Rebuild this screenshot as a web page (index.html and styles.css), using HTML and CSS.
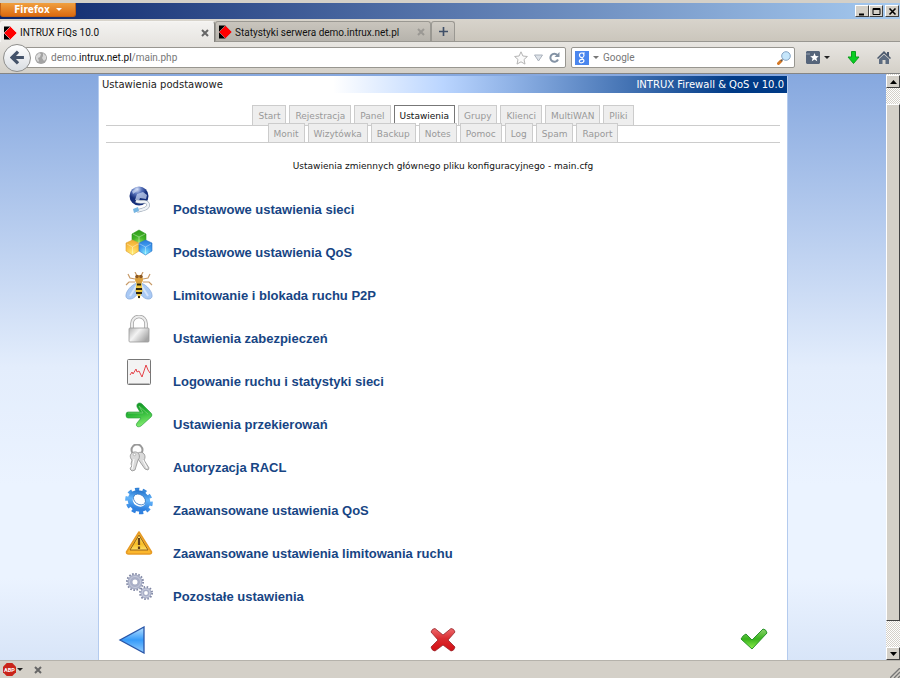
FILE: index.html
```html
<!doctype html>
<html lang="pl">

<head>
    <meta charset="utf-8" />
    <meta name="viewport" content="width=device-width, initial-scale=1.0" />
    <title>INTRUX FiQs 10.0</title>
    <link rel="stylesheet" href="styles.css">
</head>

<body>
    <header class="title-bar">
        <button class="firefox-btn">Firefox <span class="caret"></span></button>
        <div class="window-btns">
            <button class="win-btn" aria-label="Minimize"><svg viewBox="0 0 11 9"><path d="M2 7.5h5" stroke="#000" stroke-width="2"/></svg></button>
            <button class="win-btn" aria-label="Maximize"><svg viewBox="0 0 11 9"><path d="M2 1.5h7v6H2zM2 2.5h7" fill="none" stroke="#000"/></svg></button>
            <button class="win-btn win-close" aria-label="Close"><svg viewBox="0 0 11 9"><path d="M2.5 1.5l6 6M8.5 1.5l-6 6" stroke="#000" stroke-width="1.6"/></svg></button>
        </div>
    </header>

    <nav class="browser-tabs" aria-label="Browser tabs">
        <div class="browser-tab active">
            <svg class="favicon" viewBox="0 0 14 14"><path d="M0 0h7v14H0z"/><path d="M7 0l7 7-7 7-7-7z" fill="#f00" stroke="#fff" stroke-width=".6"/></svg>
            <span class="tab-title">INTRUX FiQs 10.0</span>
            <button class="tab-close" aria-label="Close tab"><svg viewBox="0 0 8 8"><path d="M1 1l6 6M7 1L1 7"/></svg></button>
        </div>
        <div class="browser-tab">
            <svg class="favicon" viewBox="0 0 14 14"><path d="M0 0h7v14H0z"/><path d="M7 0l7 7-7 7-7-7z" fill="#f00" stroke="#bbb" stroke-width=".6"/></svg>
            <span class="tab-title">Statystyki serwera demo.intrux.net.pl</span>
            <button class="tab-close" aria-label="Close tab"><svg viewBox="0 0 8 8"><path d="M1 1l6 6M7 1L1 7"/></svg></button>
        </div>
        <button class="new-tab" aria-label="New tab"><svg viewBox="0 0 10 10"><path d="M5 0v10M0 5h10" stroke="#3f4f68" stroke-width="1.8"/></svg></button>
    </nav>

    <div class="nav-bar">
        <button class="back-btn" aria-label="Back"><svg viewBox="0 0 14 14"><path d="M7.5 1.5L2 7l5.500 5.500M2.500 7H13" fill="none" stroke="#44536a" stroke-width="3"/></svg></button>
        <div class="url-bar">
            <svg class="globe" viewBox="0 0 12 12"><circle cx="6" cy="6" r="6" fill="#a3a3a3"/><path d="M1 4l3-3 2 1-1 3-2 1 1 3-1 1-2-3zM8 1l3 3v3L9 9 7 6l1-2z" fill="#d9d9d9"/></svg>
            <a class="url" href="#">demo.<b>intrux.net.pl</b>/main.php</a>
            <button aria-label="Bookmark this page"><svg width="14" height="14" viewBox="0 0 14 14"><path d="M7 .8l1.900 4.200 4.500.5-3.400 3 1 4.600-4-2.300-4 2.300 1-4.600-3.400-3 4.500-.5z" fill="#fafafa" stroke="#b4b4b4"/></svg></button>
            <button aria-label="History"><svg width="9" height="8" viewBox="0 0 9 8"><path d="M.5 1h8l-4 6z" fill="#dde2e8" stroke="#aab2bc"/></svg></button>
            <button aria-label="Reload"><svg width="11" height="11" viewBox="0 0 11 11"><path d="M8.300 3A4 4 0 1 0 9 7.500" fill="none" stroke="#8493a5" stroke-width="2"/><path d="M10.500 0v5h-5z" fill="#8493a5"/></svg></button>
        </div>
        <div class="search-bar">
            <svg class="engine" viewBox="0 0 14 14"><path d="M0 0h14v14H0z" fill="#4a86ee"/><path d="M9.800 2H6.600a2.300 2.300 0 1 0 .4 4.600 2.300 2.300 0 0 0 .8-4.300M7 6.600c-.8 1 1.900 1.400 1.900 3 0 2.800-4.600 2.800-4.600.6 0-1.700 2.600-2 3.700-1.800" fill="none" stroke="#fff" stroke-width="1.200"/></svg>
            <span class="caret"></span>
            <input type="text" placeholder="Google" aria-label="Search">
            <svg class="loupe" viewBox="0 0 14 14"><path d="M1.500 12.500L4 10" stroke="#d57825" stroke-width="3" stroke-linecap="round"/><path d="M4 10l1.500-1.500" stroke="#555" stroke-width="1.500"/><circle cx="9" cy="5" r="4.300" fill="#c6e6fb" stroke="#86a4c4"/></svg>
        </div>
        <div class="toolbar">
            <button class="bookmarks" aria-label="Bookmarks"><svg width="14" height="13" viewBox="0 0 14 13"><path d="M1 0h12l1 1v11l-1 1H1l-1-1V1z" fill="#56657a"/><path d="M0 3h4" stroke="#96a2b1"/><path d="M8.500 2l1.200 3 3.100.2-2.400 2 .8 3.100-2.700-1.700-2.700 1.700.8-3.100-2.400-2L7.300 5z" fill="#fff"/></svg><span class="caret"></span></button>
            <button aria-label="Downloads"><svg width="13" height="13" viewBox="0 0 13 13"><path d="M4.500.5h4V6H12l-5.500 6.500L1 6h3.500z" fill="#08ce21" stroke="#0b9e1c"/></svg></button>
            <button aria-label="Home"><svg width="14" height="13" viewBox="0 0 14 13"><path d="M0 7l7-7 3 3V1h2v4l2 2-1 1-6-5.500L1 8z" fill="#4a586c"/><path d="M2 8l5-4.500L12 8v5H8.500V9h-3v4H2z" fill="#5d6c80"/></svg></button>
        </div>
    </div>

    <div class="viewport">
        <main class="page">
            <div class="page-head">
                <span>Ustawienia podstawowe</span>
                <span class="product">INTRUX Firewall &amp; QoS v 10.0</span>
            </div>

            <nav class="menu">
                <div class="menu-row">
                    <a href="#">Start</a>
                    <a href="#">Rejestracja</a>
                    <a href="#">Panel</a>
                    <a href="#" class="current">Ustawienia</a>
                    <a href="#">Grupy</a>
                    <a href="#">Klienci</a>
                    <a href="#">MultiWAN</a>
                    <a href="#">Pliki</a>
                </div>
                <div class="menu-row second">
                    <a href="#">Monit</a>
                    <a href="#">Wizytówka</a>
                    <a href="#">Backup</a>
                    <a href="#">Notes</a>
                    <a href="#">Pomoc</a>
                    <a href="#">Log</a>
                    <a href="#">Spam</a>
                    <a href="#">Raport</a>
                </div>
            </nav>

            <p class="intro">Ustawienia zmiennych głównego pliku konfiguracyjnego - main.cfg</p>

            <ul class="settings">
                <li>
                    <svg viewBox="0 0 28 28">
                        <defs><radialGradient id="globe" cx=".4" cy=".15"><stop offset="0" stop-color="#dbe5fa"/><stop offset=".5" stop-color="#5873bb"/><stop offset="1" stop-color="#162f7b"/></radialGradient></defs>
                        <circle cx="14" cy="10" r="9.500" fill="url(#globe)"/>
                        <path d="M12 8l6-2 4 3-1 4-6-1-1 3-4-1zM7 5l4-2 1 2-4 3z" fill="#c6d4f0" opacity=".75"/>
                        <path d="M11 15c4 2 8 0 10 1 5 3 1 7-5 8l-4 1" fill="none" stroke="#a4afbc" stroke-width="3.600"/>
                        <path d="M11 15c4 2 8 0 10 1 5 3 1 7-5 8l-4 1" fill="none" stroke="#eff3f7" stroke-width="2.200"/>
                        <path d="M8 23l5-2 1 4-5 2z" fill="#75b5e2"/>
                    </svg>
                    <a href="#">Podstawowe ustawienia sieci</a>
                </li>
                <li>
                    <svg viewBox="0 0 28 28">
                        <defs>
                            <radialGradient id="cubeGreen" cx=".5" cy=".9" r=".9"><stop stop-color="#a4e866"/><stop offset=".55" stop-color="#41b526"/><stop offset="1" stop-color="#2c9818"/></radialGradient>
                            <radialGradient id="cubeYellow" cx=".5" cy=".9" r=".9"><stop stop-color="#fff07c"/><stop offset=".55" stop-color="#fcc64a"/><stop offset="1" stop-color="#edab32"/></radialGradient>
                            <radialGradient id="cubeBlue" cx=".5" cy=".9" r=".9"><stop stop-color="#82edff"/><stop offset=".55" stop-color="#429df0"/><stop offset="1" stop-color="#287bdc"/></radialGradient>
                        </defs>
                        <path d="M14 1l7 4v8l-7 4-7-4V5z" fill="url(#cubeGreen)" stroke="#329a23" stroke-width=".6" stroke-linejoin="round"/>
                        <path d="M7.500 11l6.500 3v8l-6.500 4L1 22v-8z" fill="url(#cubeYellow)" stroke="#dca338" stroke-width=".6" stroke-linejoin="round"/>
                        <path d="M20.500 11l6.500 3v8l-6.500 4-6.500-4v-8z" fill="url(#cubeBlue)" stroke="#3079c6" stroke-width=".6" stroke-linejoin="round"/>
                        <path d="M8 5l6 3 6-3M14 8v8M2 15l5.500 3 5.500-3M7.500 18v7M15 15l5.500 3 5.500-3M20.500 18v7" fill="none" stroke="#fff" stroke-width=".7" opacity=".55"/>
                    </svg>
                    <a href="#">Podstawowe ustawienia QoS</a>
                </li>
                <li>
                    <svg viewBox="0 0 28 28">
                        <path d="M10 7L5 6 3 2M10 10H4l-3 3M18 7l5-1 2-4M18 10h6l3 3M12 4l-2-4M16 4l2-4" fill="none" stroke="#c79a68" stroke-width="1.200"/>
                        <path d="M12 11C6 13 0 20 1 25c2 4 9 2 12-4zM16 11c6 2 12 9 11 14-2 4-9 2-12-4z" fill="#a9c9f4" stroke="#86a9da" stroke-width=".7"/>
                        <path d="M12 13L5 24M16 13l7 11" stroke="#d4e4fb" stroke-width="2"/>
                        <ellipse cx="14" cy="7.500" rx="4" ry="4.500" fill="#dba03d"/><circle cx="12" cy="4.500" r="1.700" fill="#8b5722"/><circle cx="16" cy="4.500" r="1.700" fill="#8b5722"/>
                        <path d="M11.500 11h5l1 8-3.500 8-3.500-8z" fill="#efc63c"/><path d="M12 12.500h4M11 17h6M11 21h6M13 25h2" stroke="#2c2514" stroke-width="2"/>
                    </svg>
                    <a href="#">Limitowanie i blokada ruchu P2P</a>
                </li>
                <li>
                    <svg viewBox="0 0 28 28">
                        <defs><linearGradient id="steel" x2="1" y2=".6"><stop stop-color="#b4b4b4"/><stop offset=".45" stop-color="#f3f3f3"/><stop offset="1" stop-color="#a6a6a6"/></linearGradient></defs>
                        <path d="M7 14V8.500a7 7 0 0 1 14 0V14" fill="none" stroke="#a5a5a5" stroke-width="3.600"/>
                        <path d="M7 14V8.500a7 7 0 0 1 14 0V14" fill="none" stroke="#ececec" stroke-width="2"/>
                        <rect x="4" y="13" width="20" height="14" rx="1" fill="url(#steel)" stroke="#9a9a9a" stroke-width=".8"/>
                    </svg>
                    <a href="#">Ustawienia zabezpieczeń</a>
                </li>
                <li>
                    <svg viewBox="0 0 28 28">
                        <rect x="2.500" y="1.500" width="23" height="25" rx="1" fill="#f3f3f3" stroke="#777"/>
                        <path d="M3.500 25.500h21" stroke="#bbb"/>
                        <path d="M5 17l2-3 1 2 3-5 1 3 2-1 3 6 4-12 2 5 2 3" fill="none" stroke="#e5434a"/>
                    </svg>
                    <a href="#">Logowanie ruchu i statystyki sieci</a>
                </li>
                <li>
                    <svg viewBox="0 0 28 28">
                        <defs><linearGradient id="green" x2=".3" y2="1"><stop stop-color="#0c8a20"/><stop offset=".5" stop-color="#28b535"/><stop offset="1" stop-color="#78e668"/></linearGradient></defs>
                        <path d="M3 11h12l-3-5c-1-4 3-5 5-3l9 9q2 2 0 4l-10 9c-3 2-6 0-4-3l4-5H3q-2 0-2-3t2-3z" fill="url(#green)" stroke="#219638" stroke-width=".6"/>
                        <path d="M3 12h15l-4-7 9 8" fill="none" stroke="#79ce76" stroke-width=".8"/>
                    </svg>
                    <a href="#">Ustawienia przekierowań</a>
                </li>
                <li>
                    <svg viewBox="0 0 28 28">
                        <circle cx="12" cy="6" r="5.500" fill="none" stroke="#999" stroke-width="2"/>
                        <g fill="#dadada" stroke="#8f8f8f" stroke-width=".8" stroke-linejoin="round">
                            <path d="M13 9c5-3 9 3 6 7l5 8-1 2-3-1-7-10c-3-1-3-4 0-6z"/>
                            <path d="M9 8c5-1 7 5 4 8l-3 10-3 1-2-2 1-2 1-1-1-2 1-4c-3-3-2-7 2-8z"/>
                        </g>
                        <path d="M9 15L7 25M18 16l4 8" stroke="#fff"/>
                        <circle cx="9.500" cy="10.500" r="1.200" fill="#fff" stroke="#999" stroke-width=".6"/>
                    </svg>
                    <a href="#">Autoryzacja RACL</a>
                </li>
                <li>
                    <svg viewBox="0 0 28 28">
                        <defs><linearGradient id="cog" x2=".6" y2="1"><stop stop-color="#1f6fc9"/><stop offset=".5" stop-color="#64b5fa"/><stop offset="1" stop-color="#2f80df"/></linearGradient></defs>
                        <g transform="rotate(35 14 14)" fill="none" stroke="url(#cog)"><ellipse cx="14" cy="14" rx="12.500" ry="11" stroke-width="3.500" stroke-dasharray="4.100 3.300"/><ellipse cx="14" cy="14" rx="9.200" ry="7.800" stroke-width="5"/></g>
                        <ellipse cx="13.500" cy="12.500" rx="6.500" ry="4.800" transform="rotate(35 14 14)" fill="#fff" stroke="#2167b8" stroke-width=".7"/>
                    </svg>
                    <a href="#">Zaawansowane ustawienia QoS</a>
                </li>
                <li>
                    <svg viewBox="0 0 28 28">
                        <defs><linearGradient id="warn" x2="0" y2="1"><stop stop-color="#fff08a"/><stop offset=".6" stop-color="#f8bd25"/><stop offset="1" stop-color="#ffe066"/></linearGradient></defs>
                        <path d="M14 2L26.500 22q0 2-2 2h-21q-2 0-2-2z" fill="#fbb72d" stroke="#e79b25" stroke-width="1.600" stroke-linejoin="round"/>
                        <path d="M14 5l9 15H5z" fill="url(#warn)" stroke="#8b5a18" stroke-width=".9"/>
                        <path d="M14 8v7M14 16.500V19" stroke="#63401b" stroke-width="2.200"/>
                    </svg>
                    <a href="#">Zaawansowane ustawienia limitowania ruchu</a>
                </li>
                <li>
                    <svg viewBox="0 0 28 28">
                        <g fill="none"><circle cx="10" cy="9" r="8" stroke="#7f86a3" stroke-width="2" stroke-dasharray="1.600 1.540"/><circle cx="10" cy="9" r="5" stroke="#a9afc7" stroke-width="5"/><circle cx="10" cy="9" r="5.500" stroke="#c6cbdc"/>
                        <circle cx="21" cy="20" r="6" stroke="#7f86a3" stroke-width="2" stroke-dasharray="1.500 1.640"/><circle cx="21" cy="20" r="3.700" stroke="#a9afc7" stroke-width="3.600"/><circle cx="21" cy="20" r="4" stroke="#c6cbdc"/></g>
                    </svg>
                    <a href="#">Pozostałe ustawienia</a>
                </li>
            </ul>

            <div class="actions">
                <button aria-label="Wstecz">
                    <svg viewBox="0 0 28 28"><defs><linearGradient id="blue" x2="0" y2="1"><stop stop-color="#b9e2ff"/><stop offset=".5" stop-color="#369bfa"/><stop offset="1" stop-color="#93cdff"/></linearGradient></defs><path d="M26 1v26L2 14z" fill="url(#blue)" stroke="#2855a8" stroke-width="1.300"/></svg>
                </button>
                <button aria-label="Anuluj">
                    <svg viewBox="0 0 28 28"><defs><linearGradient id="red" x2="0" y2="1"><stop stop-color="#ee6a6d"/><stop offset=".45" stop-color="#d92c30"/><stop offset="1" stop-color="#d40d12"/></linearGradient></defs><path d="M6 2.500l8 6.500 8-6.500q3 0 4 3.500l-7 8 7 7q-1 4-4 4l-8-6-8 6q-3 0-4-4l7-7-7-8q1-3.500 4-3.500z" fill="url(#red)" stroke="#95252a" stroke-width=".8" stroke-linejoin="round"/></svg>
                </button>
                <button aria-label="Zapisz">
                    <svg viewBox="0 0 28 28"><defs><linearGradient id="tick" x2="0" y2="1"><stop stop-color="#8cd36e"/><stop offset=".5" stop-color="#38b31c"/><stop offset="1" stop-color="#8ff04d"/></linearGradient></defs><path d="M1 13q2-4 5-5l6 6L23 3q3 0 4 4L12 23z" fill="url(#tick)" stroke="#2a942b" stroke-linejoin="round"/></svg>
                </button>
            </div>
        </main>
        <div class="scrollbar">
            <button aria-label="Scroll up"><svg viewBox="0 0 7 4"><path d="M0 4l3.500-4L7 4z"/></svg></button>
            <div class="thumb"></div>
            <button aria-label="Scroll down"><svg viewBox="0 0 7 4"><path d="M0 0l3.500 4L7 0z"/></svg></button>
        </div>
    </div>

    <footer class="addon-bar">
        <button class="adblock">
            <svg class="octagon" viewBox="0 0 14 14"><path d="M4 0h6l4 4v6l-4 4H4l-4-4V4z" fill="#c9231a"/><text x="7" y="9.500" text-anchor="middle">ABP</text></svg>
            <span class="caret"></span>
        </button>
        <button class="tab-close" aria-label="Close add-on bar"><svg viewBox="0 0 8 8"><path d="M1 1l6 6M7 1L1 7"/></svg></button>
        <svg class="grip" viewBox="0 0 10 10"><path d="M0 10L10 0M4 10l6-6M8 10l2-2" stroke="#777" stroke-width="1.400"/></svg>
    </footer>
</body>

</html>
```
FILE: styles.css
```css
* {
    box-sizing: border-box;
}

body {
    display: flex;
    flex-direction: column;
    height: 100vh;
    margin: 0;
    overflow: hidden;
    font-family: Roboto, Tahoma, sans-serif;
    font-size: 10px;
    color: #222;
    background: #d4d0c8;
}

button {
    display: flex;
    align-items: center;
    justify-content: center;
    padding: 0;
    border: 0;
    background: none;
    font: inherit;
    color: inherit;
}

svg {
    display: block;
    flex-shrink: 0;
}

a {
    color: inherit;
    text-decoration: none;
}

.caret {
    border: 3px solid transparent;
    border-top-color: currentColor;
    border-bottom: 0;
}

/* Window title */
.title-bar {
    display: flex;
    justify-content: space-between;
    height: 19px;
    border-top: 3px solid #d4d0c8;
    background: linear-gradient(90deg, #0a246a, #a6caf0);
    flex-shrink: 0;
}

.firefox-btn {
    gap: 6px;
    width: 76px;
    height: 14px;
    border: 1px solid #c26318;
    border-top: 0;
    border-radius: 0 0 3px 3px;
    background: linear-gradient(#f0a040, #dc6a10);
    font-family: "DejaVu Sans Condensed", "DejaVu Sans", sans-serif;
    font-weight: bold;
    color: #fff;
}

.window-btns {
    display: flex;
    padding: 2px 1px 0 0;
}

.win-btn {
    width: 14px;
    height: 12px;
    border: 1px solid;
    border-color: #fff #404040 #404040 #fff;
    background: #d4d0c8;
}

.win-btn svg {
    width: 11px;
    height: 9px;
}

.win-close {
    margin-left: 2px;
}

/* Browser tabs */
.browser-tabs {
    display: flex;
    height: 23px;
    padding-top: 2px;
    border-bottom: 1px solid #999791;
    background: linear-gradient(#d8d4cc, #cbc6bc);
    flex-shrink: 0;
}

.browser-tab {
    display: flex;
    align-items: center;
    gap: 3px;
    width: 216px;
    padding: 1px 5px 0 3px;
    border: 1px solid #9a9892;
    border-bottom: 0;
    border-radius: 3px 3px 0 0;
    background: linear-gradient(#c9c5bd, #b6b3ac);
}

.browser-tab.active {
    height: 21px;
    width: 215px;
    border-color: #f6f5f3 #85837e transparent #f6f5f3;
    background: linear-gradient(#f3f2f0, #e8e6e2);
}

.favicon {
    width: 13px;
    height: 14px;
}

.tab-title {
    flex: 1;
    white-space: nowrap;
    color: #111;
}

.tab-close svg {
    width: 8px;
    height: 8px;
    stroke: #666;
    stroke-width: 2;
}

.browser-tab:not(.active) .tab-close {
    opacity: 0.4;
}

.new-tab {
    width: 24px;
    border: 1px solid #9a9892;
    border-bottom: 0;
    border-radius: 3px 3px 0 0;
    background: linear-gradient(#d0ccc4, #bbb7b0);
}

.new-tab svg {
    width: 9px;
    height: 9px;
}

/* Address and search */
.nav-bar {
    display: flex;
    align-items: center;
    height: 32px;
    padding: 0 9px 0 3px;
    border-bottom: 1px solid #858585;
    background: linear-gradient(#e8e6e2, #d4d0c8);
    flex-shrink: 0;
}

.back-btn {
    z-index: 1;
    width: 28px;
    height: 28px;
    margin-right: -6px;
    border: 1px solid #8e8e8c;
    border-radius: 50%;
    background: linear-gradient(#fff, #d9dde2);
}

.back-btn svg {
    width: 15px;
    height: 15px;
}

.url-bar,
.search-bar {
    display: flex;
    align-items: center;
    height: 21px;
    border: 1px solid #989690;
    border-radius: 2px;
    background: #fff;
}

.url-bar {
    flex: 1;
    gap: 6px;
    padding: 0 5px 0 9px;
}

.globe {
    width: 12px;
    height: 12px;
}

.url {
    flex: 1;
    margin-left: -2px;
    color: #777;
}

.url b {
    font-weight: normal;
    color: #111;
}

.search-bar {
    gap: 4px;
    width: 224px;
    margin-left: 5px;
    padding: 0 3px;
    color: #777;
}

.search-bar input {
    flex: 1;
    min-width: 0;
    padding: 0;
    border: 0;
    outline: 0;
    font: inherit;
}

.search-bar input::placeholder {
    color: #777;
}

.engine,
.loupe {
    width: 14px;
    height: 14px;
}

.toolbar {
    display: flex;
    align-items: center;
    gap: 17px;
    margin-left: 11px;
}

.bookmarks {
    gap: 4px;
}

/* Page */
.viewport {
    display: flex;
    flex: 1;
    min-height: 0;
    background: linear-gradient(#86a8df, #e3edfc 50%, #ebf3ff 70%, #ebf3ff 86%, #d8e5f8);
}

.page {
    flex: 1;
    max-width: 690px;
    margin: 2px auto 0;
    border: 1px solid #b4cbee;
    border-width: 0 1px;
    background: #fff;
    font-family: "DejaVu Sans", Verdana, sans-serif;
}

.page-head {
    display: flex;
    justify-content: space-between;
    padding: 0 3px;
    line-height: 17px;
    color: #222;
    background: linear-gradient(90deg, #fff 34%, #bad5ff 50%, #8fb2e6 60%, #003a86 92%);
}

.product {
    color: #fff;
}

.menu {
    padding: 12px 7px 0;
    font-size: 9px;
}

.menu-row {
    display: flex;
    justify-content: center;
    gap: 3px;
    height: 21px;
    border-bottom: 1px solid #ccc;
}

.menu-row.second {
    height: 20px;
    margin-top: -3px;
}

.menu-row a {
    padding: 0 5px;
    border: 1px solid #ccc;
    border-bottom: 0;
    line-height: 20px;
    color: #999;
    background: #eee;
}

.menu-row .current {
    border-color: #777;
    color: #111;
    background: #fff;
}

.intro {
    margin: 16px 0 13px;
    font-size: 9px;
    line-height: 14px;
    text-align: center;
    color: #111;
}

.settings {
    margin: 0;
    padding: 0 0 0 26px;
    list-style: none;
}

.settings li {
    display: flex;
    gap: 20px;
    height: 43px;
}

.settings svg,
.actions svg {
    width: 28px;
    height: 28px;
}

.settings a {
    padding-top: 15px;
    font-family: "Liberation Sans", Arial, sans-serif;
    font-size: 13px;
    font-weight: bold;
    line-height: 18px;
    color: #174584;
}

.actions {
    display: flex;
    justify-content: space-between;
    padding: 10px 19px 0;
}

/* Scrollbar */
.scrollbar {
    display: flex;
    flex-direction: column;
    width: 14px;
    padding-top: 1px;
    background: repeating-conic-gradient(#fff 0 25%, #d4d0c8 0 50%) 0 0 / 2px 2px;
}

.scrollbar button,
.thumb {
    border: 1px solid;
    border-color: #fff #404040 #404040 #fff;
    background: #d4d0c8;
}

.scrollbar button {
    height: 13px;
}

.scrollbar svg {
    width: 7px;
    height: 4px;
}

.thumb {
    flex: 1;
    margin: 16px 0 26px;
}

/* Add-on bar */
.addon-bar {
    display: flex;
    align-items: center;
    gap: 11px;
    height: 18px;
    padding-left: 3px;
    border-top: 1px solid #b5b2ab;
    flex-shrink: 0;
}

.adblock {
    gap: 1px;
}

.octagon {
    width: 13px;
    height: 13px;
}

.octagon text {
    font-size: 6px;
    font-weight: bold;
    fill: #fff;
}

.grip {
    width: 10px;
    height: 10px;
    margin: 7px 0 0 auto;
}
```
